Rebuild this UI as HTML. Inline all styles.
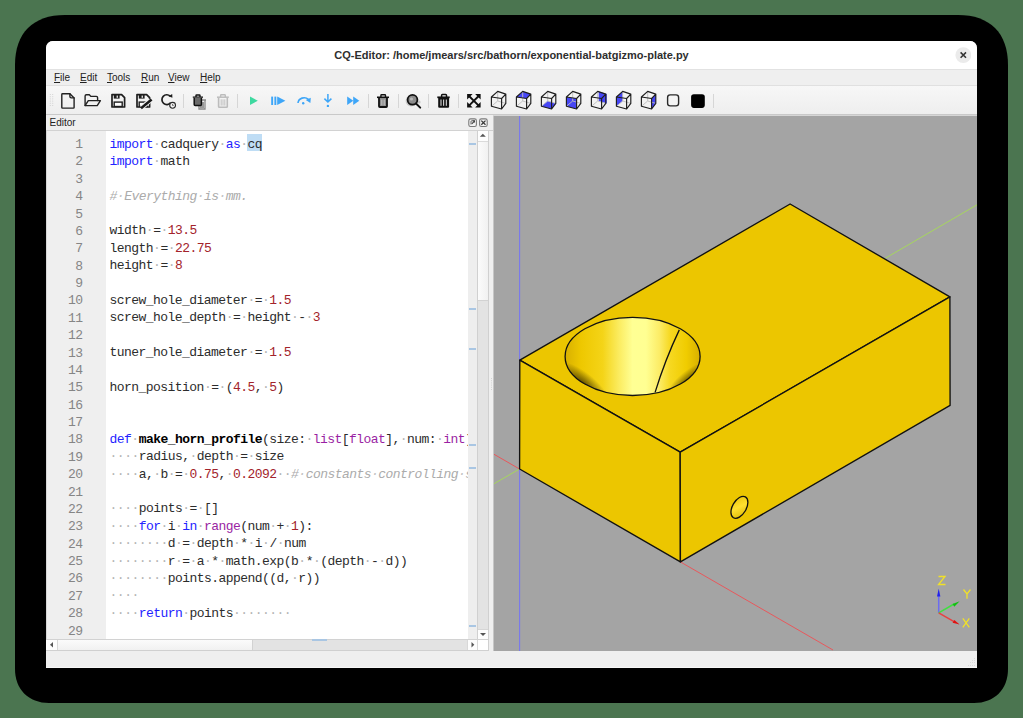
<!DOCTYPE html>
<html><head><meta charset="utf-8">
<style>
html,body{margin:0;padding:0;}
body{width:1023px;height:718px;overflow:hidden;background:#4b7550;position:relative;font-family:"Liberation Sans",sans-serif;}
.a{position:absolute;}
#shadow{left:15px;top:15px;width:993px;height:688px;background:#000;border-radius:48px 48px 33px 33px;}
#win{left:46px;top:41px;width:931px;height:627px;background:#efefef;border-radius:7px 7px 0 0;overflow:hidden;}
#title{left:46px;top:41px;width:931px;height:28px;background:#fff;border-radius:7px 7px 0 0;}
#titletxt{left:46px;top:47px;width:931px;text-align:center;font-weight:bold;font-size:11px;color:#2e2e2e;line-height:16px;letter-spacing:0px;}
#closebtn{left:955px;top:47px;width:16px;height:16px;border-radius:50%;background:#ebebeb;}
#menubar{left:46px;top:69px;width:931px;height:16px;box-sizing:border-box;background:#efefef;border-top:1px solid #e2e2e2;}
.menu{top:71px;font-size:10px;color:#222;line-height:13px;}
.menu u{text-decoration:underline;text-underline-offset:0.5px;text-decoration-thickness:1px;}
#toolbar{left:46px;top:85px;width:931px;height:30px;box-sizing:border-box;background:linear-gradient(#f7f7f7,#eeeeee);border-top:1px solid #e0e0e0;border-bottom:1px solid #c9c9c9;}
#dockt{left:46px;top:115px;width:447px;height:15px;background:#efefef;border-bottom:1px solid #cfcfcf;}
#docktxt{left:49.5px;top:116px;font-size:10px;color:#222;line-height:13px;}
#gutter{left:46px;top:131px;width:60px;height:508px;background:#efefef;border-left:1px solid #d6d6d6;box-sizing:border-box;}
#code{left:106px;top:131px;width:362px;height:508px;background:#fff;overflow:hidden;}
#strip{left:468px;top:131px;width:9px;height:508px;background:#eeeeee;}
#vscroll{left:477px;top:131px;width:12px;height:508px;background:#e3e3e3;border-left:1px solid #d0d0d0;border-right:1px solid #cfcfcf;box-sizing:border-box;}
#hscroll{left:46px;top:639px;width:443px;height:12px;background:#e3e3e3;border-top:1px solid #d0d0d0;border-bottom:1px solid #cfcfcf;box-sizing:border-box;}
#view3d{left:493px;top:116px;width:484px;height:535px;background:#a4a4a4;}
#status{left:46px;top:651px;width:931px;height:17px;background:#efefef;}
.ln{position:absolute;left:0px;width:36.5px;text-align:right;font-family:"Liberation Mono",monospace;font-size:13px;letter-spacing:-0.6px;color:#858585;line-height:17.375px;}
.cl{position:absolute;left:3.6px;margin-top:-0.6px;white-space:pre;font-family:"Liberation Mono",monospace;font-size:13px;letter-spacing:-0.55px;color:#2c2c2c;line-height:17.375px;}
.k{color:#2323ff;}
.n{color:#a3232b;}
.b{color:#9a1fa3;}
.c{color:#ababab;font-style:italic;}
.d{color:#b4b4b4;font-style:normal;}
.d2{color:#c4c4c4;}
.f{font-weight:bold;color:#000;}
.hl{background:#c6def5;}
</style></head><body>
<svg class="a" style="left:0;top:0" width="1023" height="718" viewBox="0 0 1023 718"><path d="M65,15 H958 C990.0,15 1008,33.0 1008,65 V669 C1008,689.4 994.4,703 974,703 H49 C28.6,703 15,689.4 15,669 V65 C15,33.0 33.0,15 65,15 Z" fill="#000"/></svg>
<div id="win" class="a"></div>
<div id="title" class="a"></div>
<div id="titletxt" class="a">CQ-Editor: /home/jmears/src/bathorn/exponential-batgizmo-plate.py</div>

<div id="menubar" class="a"></div>
<div class="a menu" style="left:54px"><u>F</u>ile</div>
<div class="a menu" style="left:80px"><u>E</u>dit</div>
<div class="a menu" style="left:107px"><u>T</u>ools</div>
<div class="a menu" style="left:141px"><u>R</u>un</div>
<div class="a menu" style="left:168px"><u>V</u>iew</div>
<div class="a menu" style="left:200px"><u>H</u>elp</div>
<div id="toolbar" class="a"></div>
<div id="dockt" class="a"></div>
<div id="docktxt" class="a">Editor</div>
<div id="gutter" class="a"></div>
<div id="code" class="a"></div>
<div class="a" style="left:247px;top:134px;width:15px;height:16.5px;background:#bfddf5"></div>
<div id="strip" class="a"></div>
<div id="vscroll" class="a"></div>
<div id="hscroll" class="a"></div>
<div id="view3d" class="a"></div>
<div id="status" class="a"></div>
<!--SCROLL-->
<div class="a" style="left:46px;top:130px;width:443px;height:1px;background:#d2d2d2"></div>
<div class="a" style="left:478px;top:131px;width:10px;height:9.5px;background:#fdfdfd"></div>
<svg class="a" style="left:478px;top:131px" width="10" height="10" viewBox="478 131 10 10"><polygon points="482.8,133.8 479.8,136.8 485.8,136.8" fill="#555"/></svg>
<div class="a" style="left:478px;top:140.5px;width:10px;height:1px;background:#dadada"></div>
<div class="a" style="left:478px;top:141.5px;width:10px;height:158.5px;background:linear-gradient(90deg,#fbfbfb,#f1f1f1)"></div>
<div class="a" style="left:478px;top:300px;width:10px;height:1px;background:#d2d2d2"></div>
<div class="a" style="left:478px;top:629px;width:10px;height:1px;background:#d6d6d6"></div>
<div class="a" style="left:478px;top:630px;width:10px;height:9px;background:#fdfdfd"></div>
<svg class="a" style="left:478px;top:629px" width="10" height="11" viewBox="478 629 10 11"><polygon points="480,633 486,633 483,636" fill="#555"/></svg>
<div class="a" style="left:46px;top:639px;width:443px;height:1px;background:#d2d2d2"></div>
<div class="a" style="left:46px;top:650px;width:443px;height:1px;background:#d0d0d0"></div>
<div class="a" style="left:46px;top:640px;width:11px;height:10px;background:#fdfdfd"></div>
<svg class="a" style="left:46px;top:640px" width="11" height="10" viewBox="46 640 11 10"><polygon points="50,644.8 53,642 53,647.6" fill="#555"/></svg>
<div class="a" style="left:57px;top:640px;width:1px;height:10px;background:#d8d8d8"></div>
<div class="a" style="left:58px;top:640px;width:194px;height:10px;background:linear-gradient(#fbfbfb,#f1f1f1)"></div>
<div class="a" style="left:252px;top:640px;width:1px;height:10px;background:#d2d2d2"></div>
<div class="a" style="left:467px;top:640px;width:1px;height:10px;background:#d8d8d8"></div>
<div class="a" style="left:468px;top:640px;width:9.5px;height:10px;background:#fdfdfd"></div>
<svg class="a" style="left:468px;top:640px" width="10" height="10" viewBox="468 640 10 10"><polygon points="471.5,642 474.3,644.8 471.5,647.6" fill="#555"/></svg>
<div class="a" style="left:477px;top:640px;width:1px;height:10px;background:#d8d8d8"></div>
<div class="a" style="left:478px;top:640px;width:10px;height:10px;background:#fff"></div>
<div class="a" style="left:488px;top:130px;width:1px;height:521px;background:#d0d0d0"></div>
<div class="a" style="left:311.5px;top:639px;width:15.5px;height:2px;background:#a9c6e3"></div>
<div class="a" style="left:469px;top:143px;width:7px;height:2px;background:#a9c6e3"></div>
<div class="a" style="left:469px;top:308px;width:7px;height:2px;background:#a9c6e3"></div>
<div class="a" style="left:469px;top:347.5px;width:7px;height:2px;background:#a9c6e3"></div>
<div class="a" style="left:469px;top:443.5px;width:7px;height:2px;background:#a9c6e3"></div>
<div class="a" style="left:469px;top:466.5px;width:7px;height:2px;background:#a9c6e3"></div>
<div class="a" style="left:469px;top:625px;width:7px;height:2px;background:#a9c6e3"></div>
<!--/SCROLL-->
<!--DOCKBTN-->
<svg class="a" style="left:464px;top:114px" width="30" height="16" viewBox="464 114 30 16">
<rect x="468.8" y="118.9" width="7.6" height="7.6" rx="1.8" fill="#f4f4f4" stroke="#7a7a7a" stroke-width="1.1"/>
<path d="M471,124.5 V121.5 Q471,120.8 471.7,120.8 H473.5" fill="none" stroke="#555" stroke-width="0.9"/>
<path d="M471.8,123.8 L474.6,121" stroke="#444" stroke-width="1.1"/>
<polygon points="475,120.3 475,123 472.4,120.3" fill="#444"/>
<rect x="479.6" y="118.9" width="7.6" height="7.6" rx="1.8" fill="#f4f4f4" stroke="#7a7a7a" stroke-width="1.1"/>
<path d="M481.3,120.6 L485.5,124.8 M485.5,120.6 L481.3,124.8" stroke="#3a3a3a" stroke-width="1.3"/>
</svg>
<svg class="a" style="left:955px;top:47px" width="16" height="16" viewBox="955 47 16 16">
<circle cx="963.3" cy="55.05" r="7.9" fill="#ebebeb"/>
<path d="M960.6,52.4 L966,57.7 M966,52.4 L960.6,57.7" stroke="#333" stroke-width="1.55"/>
</svg>
<!--/DOCKBTN-->
<!--MISC-->
<svg class="a" style="left:489px;top:376px" width="5" height="16" viewBox="489 376 5 16"><g fill="#d2d2d2"><rect x="491" y="378" width="1" height="1"/><rect x="491" y="380.2" width="1" height="1"/><rect x="491" y="382.4" width="1" height="1"/><rect x="491" y="384.6" width="1" height="1"/><rect x="491" y="386.8" width="1" height="1"/><rect x="491" y="389" width="1" height="1"/></g></svg>
<svg class="a" style="left:962px;top:656px" width="14" height="12" viewBox="962 656 14 12"><g fill="#dadada"><rect x="974" y="658" width="1" height="1"/><rect x="972" y="660" width="1" height="1"/><rect x="974" y="660" width="1" height="1"/><rect x="970" y="662" width="1" height="1"/><rect x="972" y="662" width="1" height="1"/><rect x="974" y="662" width="1" height="1"/><rect x="968" y="665" width="1" height="1"/><rect x="970" y="665" width="1" height="1"/><rect x="972" y="665" width="1" height="1"/><rect x="974" y="665" width="1" height="1"/></g></svg>
<div class="a" style="left:46px;top:667px;width:931px;height:1px;background:#f8f8f8"></div>
<!--/MISC-->
<!--CODE-->
<div class="a" style="left:106px;top:131px;width:362px;height:508px;overflow:hidden">
<div class="cl" style="top:5.100px"><span class="k">import</span><span class="d">·</span>cadquery<span class="d">·</span><span class="k">as</span><span class="d">·</span>cq</div>
<div class="cl" style="top:22.475px"><span class="k">import</span><span class="d">·</span>math</div>
<div class="cl" style="top:39.850px"></div>
<div class="cl" style="top:57.225px"><span class="c">#<span class="d2">·</span>Everything<span class="d2">·</span>is<span class="d2">·</span>mm.</span></div>
<div class="cl" style="top:74.600px"></div>
<div class="cl" style="top:91.975px">width<span class="d">·</span>=<span class="d">·</span><span class="n">13.5</span></div>
<div class="cl" style="top:109.350px">length<span class="d">·</span>=<span class="d">·</span><span class="n">22.75</span></div>
<div class="cl" style="top:126.725px">height<span class="d">·</span>=<span class="d">·</span><span class="n">8</span></div>
<div class="cl" style="top:144.100px"></div>
<div class="cl" style="top:161.475px">screw_hole_diameter<span class="d">·</span>=<span class="d">·</span><span class="n">1.5</span></div>
<div class="cl" style="top:178.850px">screw_hole_depth<span class="d">·</span>=<span class="d">·</span>height<span class="d">·</span>-<span class="d">·</span><span class="n">3</span></div>
<div class="cl" style="top:196.225px"></div>
<div class="cl" style="top:213.600px">tuner_hole_diameter<span class="d">·</span>=<span class="d">·</span><span class="n">1.5</span></div>
<div class="cl" style="top:230.975px"></div>
<div class="cl" style="top:248.350px">horn_position<span class="d">·</span>=<span class="d">·</span>(<span class="n">4.5</span>,<span class="d">·</span><span class="n">5</span>)</div>
<div class="cl" style="top:265.725px"></div>
<div class="cl" style="top:283.100px"></div>
<div class="cl" style="top:300.475px"><span class="k">def</span><span class="d">·</span><span class="f">make_horn_profile</span>(size:<span class="d">·</span><span class="b">list</span>[<span class="b">float</span>],<span class="d">·</span>num:<span class="d">·</span><span class="b">int</span>)</div>
<div class="cl" style="top:317.850px"><span class="d">·</span><span class="d">·</span><span class="d">·</span><span class="d">·</span>radius,<span class="d">·</span>depth<span class="d">·</span>=<span class="d">·</span>size</div>
<div class="cl" style="top:335.225px"><span class="d">·</span><span class="d">·</span><span class="d">·</span><span class="d">·</span>a,<span class="d">·</span>b<span class="d">·</span>=<span class="d">·</span><span class="n">0.75</span>,<span class="d">·</span><span class="n">0.2092</span><span class="d">·</span><span class="d">·</span><span class="c">#<span class="d2">·</span>constants<span class="d2">·</span>controlling<span class="d2">·</span>s</span></div>
<div class="cl" style="top:352.600px"></div>
<div class="cl" style="top:369.975px"><span class="d">·</span><span class="d">·</span><span class="d">·</span><span class="d">·</span>points<span class="d">·</span>=<span class="d">·</span>[]</div>
<div class="cl" style="top:387.350px"><span class="d">·</span><span class="d">·</span><span class="d">·</span><span class="d">·</span><span class="k">for</span><span class="d">·</span>i<span class="d">·</span><span class="k">in</span><span class="d">·</span><span class="b">range</span>(num<span class="d">·</span>+<span class="d">·</span><span class="n">1</span>):</div>
<div class="cl" style="top:404.725px"><span class="d">·</span><span class="d">·</span><span class="d">·</span><span class="d">·</span><span class="d">·</span><span class="d">·</span><span class="d">·</span><span class="d">·</span>d<span class="d">·</span>=<span class="d">·</span>depth<span class="d">·</span>*<span class="d">·</span>i<span class="d">·</span>/<span class="d">·</span>num</div>
<div class="cl" style="top:422.100px"><span class="d">·</span><span class="d">·</span><span class="d">·</span><span class="d">·</span><span class="d">·</span><span class="d">·</span><span class="d">·</span><span class="d">·</span>r<span class="d">·</span>=<span class="d">·</span>a<span class="d">·</span>*<span class="d">·</span>math.exp(b<span class="d">·</span>*<span class="d">·</span>(depth<span class="d">·</span>-<span class="d">·</span>d))</div>
<div class="cl" style="top:439.475px"><span class="d">·</span><span class="d">·</span><span class="d">·</span><span class="d">·</span><span class="d">·</span><span class="d">·</span><span class="d">·</span><span class="d">·</span>points.append((d,<span class="d">·</span>r))</div>
<div class="cl" style="top:456.850px"><span class="d">·</span><span class="d">·</span><span class="d">·</span><span class="d">·</span></div>
<div class="cl" style="top:474.225px"><span class="d">·</span><span class="d">·</span><span class="d">·</span><span class="d">·</span><span class="k">return</span><span class="d">·</span>points<span class="d">·</span><span class="d">·</span><span class="d">·</span><span class="d">·</span><span class="d">·</span><span class="d">·</span><span class="d">·</span><span class="d">·</span></div>
<div class="cl" style="top:491.600px"></div>
</div>
<div class="a" style="left:46px;top:131px;width:60px;height:508px;overflow:hidden">
<div class="ln" style="top:5.100px">1</div>
<div class="ln" style="top:22.475px">2</div>
<div class="ln" style="top:39.850px">3</div>
<div class="ln" style="top:57.225px">4</div>
<div class="ln" style="top:74.600px">5</div>
<div class="ln" style="top:91.975px">6</div>
<div class="ln" style="top:109.350px">7</div>
<div class="ln" style="top:126.725px">8</div>
<div class="ln" style="top:144.100px">9</div>
<div class="ln" style="top:161.475px">10</div>
<div class="ln" style="top:178.850px">11</div>
<div class="ln" style="top:196.225px">12</div>
<div class="ln" style="top:213.600px">13</div>
<div class="ln" style="top:230.975px">14</div>
<div class="ln" style="top:248.350px">15</div>
<div class="ln" style="top:265.725px">16</div>
<div class="ln" style="top:283.100px">17</div>
<div class="ln" style="top:300.475px">18</div>
<div class="ln" style="top:317.850px">19</div>
<div class="ln" style="top:335.225px">20</div>
<div class="ln" style="top:352.600px">21</div>
<div class="ln" style="top:369.975px">22</div>
<div class="ln" style="top:387.350px">23</div>
<div class="ln" style="top:404.725px">24</div>
<div class="ln" style="top:422.100px">25</div>
<div class="ln" style="top:439.475px">26</div>
<div class="ln" style="top:456.850px">27</div>
<div class="ln" style="top:474.225px">28</div>
<div class="ln" style="top:491.600px">29</div>
</div>
<!--/CODE-->
<!--ICONS-->
<svg class="a" style="left:46px;top:86px" width="700" height="28" viewBox="46 86 700 28">
<g fill="#d4d4d4">
<rect x="49.8" y="94" width="1" height="1"/><rect x="52.2" y="94" width="1" height="1"/>
<rect x="49.8" y="96.2" width="1" height="1"/><rect x="52.2" y="96.2" width="1" height="1"/>
<rect x="49.8" y="98.4" width="1" height="1"/><rect x="52.2" y="98.4" width="1" height="1"/>
<rect x="49.8" y="100.6" width="1" height="1"/><rect x="52.2" y="100.6" width="1" height="1"/>
<rect x="49.8" y="102.8" width="1" height="1"/><rect x="52.2" y="102.8" width="1" height="1"/>
<rect x="49.8" y="105" width="1" height="1"/><rect x="52.2" y="105" width="1" height="1"/>
</g>
<!-- separators -->
<g fill="#d6d6d6">
<rect x="183" y="94" width="1" height="14"/>
<rect x="237" y="94" width="1" height="14"/>
<rect x="368" y="94" width="1" height="14"/>
<rect x="398" y="94" width="1" height="14"/>
<rect x="428" y="94" width="1" height="14"/>
<rect x="458" y="94" width="1" height="14"/>
<rect x="713" y="94" width="1" height="14"/>
</g>
<g fill="none" stroke="#222" stroke-width="1.4" stroke-linejoin="round" stroke-linecap="round">
<!-- new -->
<path d="M62.5,93.7 H69.9 L74.1,97.9 V107.4 Q74.1,108.1 73.4,108.1 H62.5 Q61.8,108.1 61.8,107.4 V94.4 Q61.8,93.7 62.5,93.7 Z"/>
<path d="M69.9,93.7 V96.6 Q69.9,97.9 71.2,97.9 H74.1"/>
<!-- open -->
<path d="M85.1,105.6 V96 Q85.1,94.7 86.4,94.7 H89.3 L90.8,96.4 H96.3 Q97.6,96.4 97.6,97.7 V100.6"/>
<path d="M85.1,105.6 L88.3,100.6 H100.4 L97.2,105.6 Z"/>
</g>
<!-- save -->
<g>
<path d="M112,94.6 H121.6 L124.6,97.6 V107 H112 Z" fill="none" stroke="#1e1e1e" stroke-width="1.7" stroke-linejoin="round"/>
<rect x="113.8" y="95" width="5.8" height="3.6" fill="#1e1e1e"/>
<rect x="116.6" y="95.6" width="1.3" height="2.2" fill="#eee"/>
<rect x="114.2" y="102.1" width="8" height="4.4" fill="#fff" stroke="#1e1e1e" stroke-width="1.4"/>
</g>
<g>
<path d="M137,94.6 H146.6 L149.6,97.6 V107 H137 Z" fill="none" stroke="#1e1e1e" stroke-width="1.7" stroke-linejoin="round"/>
<rect x="138.8" y="95" width="5.8" height="3.6" fill="#1e1e1e"/>
<rect x="141.6" y="95.6" width="1.3" height="2.2" fill="#eee"/>
<rect x="139.2" y="102.1" width="8" height="4.4" fill="#fff" stroke="#1e1e1e" stroke-width="1.4"/>
<path d="M141.5,107.8 L150.5,100.3" stroke="#f2f2f2" stroke-width="4.6"/>
<path d="M142,107.4 L150.6,100.4" stroke="#1a1a1a" stroke-width="2.6" stroke-linecap="square"/>
</g>
<!-- reload -->
<g fill="none" stroke="#1e1e1e" stroke-width="1.7">
<path d="M170.2,96.1 A4.9,4.9 0 1 0 170.6,102.8"/>
</g>
<polygon points="168.5,96.2 172.2,93.9 172.4,97.8" fill="#1e1e1e"/>
<circle cx="172.6" cy="105.3" r="2.9" fill="#f2f2f2" stroke="#2a2a2a" stroke-width="1.1"/>
<path d="M172.6,104 V105.5 H173.6" stroke="#2a2a2a" stroke-width="0.7" fill="none"/>
<!-- trash copy -->
<g>
<path d="M198,100 H206 M199,100.6 V109 H205 V100.6" fill="none" stroke="#8a8a8a" stroke-width="1.3"/>
<rect x="200" y="102" width="4" height="6" fill="#9a9a9a"/>
<path d="M192.8,97.1 H203 M196,97 V95.6 Q196,95 196.6,95 H199.4 Q200,95 200,95.6 V97" fill="none" stroke="#111" stroke-width="1.4"/>
<path d="M194.2,97.8 V104.6 Q194.2,105.6 195.2,105.6 H200.4 Q201.4,105.6 201.4,104.6 V97.8" fill="#6a6a6a" stroke="#111" stroke-width="1.5"/>
</g>
<!-- disabled trash -->
<g fill="none" stroke="#bcbcbc">
<path d="M217,97.2 H228.8" stroke-width="1.5"/>
<path d="M220.6,97 V95.5 Q220.6,94.8 221.3,94.8 H224.6 Q225.3,94.8 225.3,95.5 V97" stroke-width="1.4"/>
<path d="M218.6,98 V106.4 Q218.6,107.2 219.4,107.2 H226.5 Q227.3,107.2 227.3,106.4 V98" stroke-width="1.6"/>
<path d="M221.2,99.3 V105.6 M223,99.3 V105.6 M224.8,99.3 V105.6" stroke-width="0.9"/>
</g>
<!-- play -->
<polygon points="250,96.6 257.8,100.8 250,105" fill="#3ed9a0"/>
<!-- debug -->
<g fill="#3ea6f8">
<rect x="271.2" y="96.6" width="1.9" height="8.4"/>
<rect x="274.4" y="96.6" width="1.9" height="8.4"/>
<polygon points="277.2,96.6 285.4,100.8 277.2,105"/>
</g>
<!-- step over -->
<path d="M298,103 A6.2,5.8 0 0 1 308.4,99.3" fill="none" stroke="#3ea6f8" stroke-width="1.6"/>
<polygon points="305.8,99.9 310.8,97.7 310.4,103" fill="#3ea6f8"/>
<circle cx="303.2" cy="103.2" r="1.2" fill="#3ea6f8"/>
<!-- step in -->
<path d="M327.9,94 V102.2 M324.4,98.6 L327.9,102 L331.4,98.6" fill="none" stroke="#3ea6f8" stroke-width="1.5"/>
<circle cx="327.9" cy="105.9" r="1.2" fill="#3ea6f8"/>
<!-- ff -->
<g fill="#3ea6f8">
<polygon points="347.2,96.6 353.3,100.8 347.2,105"/>
<polygon points="353.2,96.6 359.3,100.8 353.2,105"/>
</g>
<!-- trash -->
<g>
<path d="M377,97.3 H389" fill="none" stroke="#111" stroke-width="1.6"/>
<path d="M380.9,97 V95.4 Q380.9,94.7 381.6,94.7 H384.8 Q385.5,94.7 385.5,95.4 V97" fill="none" stroke="#111" stroke-width="1.4"/>
<path d="M379,98 V106.3 Q379,107 379.8,107 H386.2 Q387,107 387,106.3 V98" fill="#8a8a8a" stroke="#111" stroke-width="1.8"/>
<path d="M381.5,99.5 V105.4 M383,99.5 V105.4 M384.5,99.5 V105.4" stroke="#bcbcbc" stroke-width="0.8"/>
</g>
<!-- magnifier -->
<g>
<circle cx="411" cy="101" r="5.4" fill="#7a7a7a" opacity="0.35"/>
<circle cx="419" cy="102" r="1.6" fill="#aaa" opacity="0.6"/>
<circle cx="412.5" cy="99.8" r="4.9" fill="#8c8c8c" stroke="#111" stroke-width="1.8"/>
<circle cx="411.5" cy="99" r="1.6" fill="#b8b8b8"/>
<path d="M416,103.5 L420.2,107.6" stroke="#111" stroke-width="2" stroke-linecap="round"/>
</g>
<!-- trash 2 -->
<g>
<path d="M437.3,97.3 H449.7" fill="none" stroke="#111" stroke-width="1.7"/>
<path d="M441.6,97 V95.2 Q441.6,94.4 442.4,94.4 H445.7 Q446.5,94.4 446.5,95.2 V97" fill="none" stroke="#111" stroke-width="1.5"/>
<path d="M438.2,98 H449.1 V106.7 Q449.1,107.8 448,107.8 H439.3 Q438.2,107.8 438.2,106.7 Z" fill="#111"/>
<path d="M441,99.5 V105.8 M443.65,99.5 V105.8 M446.3,99.5 V105.8" stroke="#e8e8e8" stroke-width="1"/>
</g>
<!-- fit -->
<g>
<path d="M468.5,95.5 L479.2,106.2 M479.2,95.5 L468.5,106.2" stroke="#111" stroke-width="1.9"/>
<polygon points="467.1,94.1 472.6,94.1 467.1,99.6" fill="#111"/>
<polygon points="480.6,94.1 475.1,94.1 480.6,99.6" fill="#111"/>
<polygon points="467.1,107.6 472.6,107.6 467.1,102.1" fill="#111"/>
<polygon points="480.6,107.6 475.1,107.6 480.6,102.1" fill="#111"/>
</g>
<!-- cubes -->
<defs>
<g id="cube">
<path d="M497.7,91.4 V101 M497.7,101 L491.4,106.3 M497.7,101 L505.8,103.4" stroke="#bdbdbd" stroke-width="0.9" fill="none"/>
<path d="M497.7,91.4 L505.8,94.1 L501.6,98.5 L491.4,97 Z M491.4,97 V106.3 L501.6,109 V98.5 M505.8,94.1 V103.4 L501.6,109" fill="none" stroke="#1e1e1e" stroke-width="1.15" stroke-linejoin="round"/>
</g>
</defs>
<g fill="#4646f4">
<polygon points="522.7,91.4 530.8,94.1 526.6,98.5 516.4,97"/>
<polygon points="547.7,101 555.8,103.4 551.6,109 541.4,106.3"/>
<polygon points="566.4,97 576.6,98.5 576.6,109 566.4,106.3"/>
<polygon points="598.7,91.4 606.8,94.1 606.8,103.4 598.7,101"/>
<polygon points="622.7,91.4 622.7,101 616.4,106.3 616.4,97"/>
<polygon points="655.8,94.1 651.6,98.5 651.6,109 655.8,103.4"/>
</g>
<use href="#cube"/>
<use href="#cube" x="25"/>
<use href="#cube" x="50"/>
<use href="#cube" x="75"/>
<use href="#cube" x="100"/>
<use href="#cube" x="125"/>
<use href="#cube" x="150"/>
<!-- squares -->
<rect x="667.6" y="94.9" width="11" height="11" rx="2.6" fill="#f4f4f4" stroke="#2a2a2a" stroke-width="1.4"/>
<rect x="691.1" y="94.2" width="13.7" height="13.7" rx="2.8" fill="#000"/>
</svg>
<!--/ICONS-->
<!--3D-->
<svg class="a" style="left:493px;top:116px" width="484" height="535" viewBox="493 116 484 535">
<defs>
<linearGradient id="hg" x1="565" y1="0" x2="700" y2="0" gradientUnits="userSpaceOnUse">
<stop offset="0" stop-color="#d8b000"/>
<stop offset="0.12" stop-color="#eec800"/>
<stop offset="0.28" stop-color="#f4d418"/>
<stop offset="0.4" stop-color="#fbec60"/>
<stop offset="0.5" stop-color="#ffff94"/>
<stop offset="0.6" stop-color="#ffff92"/>
<stop offset="0.7" stop-color="#fcec66"/>
<stop offset="0.78" stop-color="#f6d820"/>
<stop offset="0.9" stop-color="#f0cc00"/>
<stop offset="1" stop-color="#d8b000"/>
</linearGradient>
<radialGradient id="hs1" cx="582" cy="384" r="22" gradientUnits="userSpaceOnUse" gradientTransform="translate(582 384) rotate(38) scale(1.5 0.55) translate(-582 -384)">
<stop offset="0" stop-color="#2a2000" stop-opacity="0.8"/>
<stop offset="1" stop-color="#2a2000" stop-opacity="0"/>
</radialGradient>
<radialGradient id="hs2" cx="689" cy="382" r="20" gradientUnits="userSpaceOnUse" gradientTransform="translate(689 382) rotate(-40) scale(1.5 0.55) translate(-689 -382)">
<stop offset="0" stop-color="#2a2000" stop-opacity="0.75"/>
<stop offset="1" stop-color="#2a2000" stop-opacity="0"/>
</radialGradient>
<linearGradient id="sg" x1="732" y1="518" x2="747" y2="496" gradientUnits="userSpaceOnUse">
<stop offset="0" stop-color="#d8b400"/>
<stop offset="0.5" stop-color="#ffe030"/>
<stop offset="1" stop-color="#e8c000"/>
</linearGradient>
</defs>
<!-- axes behind -->
<line x1="493" y1="453.7" x2="519.5" y2="469" stroke="#e8585c" stroke-width="1"/>
<line x1="680.4" y1="561.9" x2="833" y2="650" stroke="#e8585c" stroke-width="1"/>
<line x1="493" y1="484.3" x2="519.5" y2="469" stroke="#a6d65e" stroke-width="1"/>
<line x1="884" y1="259" x2="977" y2="204.8" stroke="#a6d65e" stroke-width="1"/>
<line x1="519.6" y1="116" x2="519.6" y2="651" stroke="#7878ee" stroke-width="1.1"/>
<!-- box faces -->
<g stroke="#111" stroke-width="1.35" stroke-linejoin="round" fill="#ecc600">
<polygon points="790.1,204 949.9,296.8 680.2,452.2 519.8,360.1"/>
<polygon points="519.8,360.1 680.2,452.2 680.4,561.9 519.6,469"/>
<polygon points="680.2,452.2 949.9,296.8 950.1,405.4 680.4,561.9"/>
</g>
<!-- horn hole -->
<ellipse cx="632.6" cy="356.4" rx="67.5" ry="39.1" fill="url(#hg)"/>
<ellipse cx="632.6" cy="356.4" rx="67.5" ry="39.1" fill="url(#hs1)"/>
<ellipse cx="632.6" cy="356.4" rx="67.5" ry="39.1" fill="url(#hs2)"/>
<ellipse cx="632.6" cy="356.4" rx="67.5" ry="39.1" fill="none" stroke="#111" stroke-width="1.3"/>
<path d="M679.3,329.9 Q665,360 655.1,392.4" fill="none" stroke="#111" stroke-width="1.3"/>
<!-- small hole -->
<ellipse cx="739.4" cy="507.3" rx="12" ry="6.9" transform="rotate(-60 739.4 507.3)" fill="url(#sg)" stroke="#111" stroke-width="1.3"/>
<!-- triad -->
<line x1="938.7" y1="612.8" x2="938.7" y2="595" stroke="#6c6cf0" stroke-width="1.5"/>
<polygon points="938.7,588.8 937,596.5 940.4,596.5" fill="#2222ee"/>
<line x1="938.7" y1="612.8" x2="954" y2="604" stroke="#40e040" stroke-width="1.5"/>
<polygon points="959.6,601.3 952.6,603.9 954.3,606.8" fill="#10c010"/>
<line x1="938.7" y1="612.8" x2="954" y2="621.6" stroke="#e84040" stroke-width="1.5"/>
<polygon points="959.6,624.5 954.3,619.9 952.6,622.8" fill="#e01010"/>
<g fill="none" stroke="#f0e028" stroke-width="1.3">
<path d="M938.5,576.5 H945 L938.5,584.5 H945.5"/>
<path d="M963.5,589.5 L967,594 L970.5,589.5 M967,594 V598.8"/>
<path d="M962.8,618.3 L969.3,627.3 M969.3,618.3 L962.8,627.3"/>
</g>
</svg>
<div class="a" style="left:493px;top:116px;width:1px;height:535px;background:#c6c6c6"></div>
<div class="a" style="left:493px;top:115px;width:484px;height:1px;background:#d6d6d6"></div>
<!--/3D-->
</body></html>
